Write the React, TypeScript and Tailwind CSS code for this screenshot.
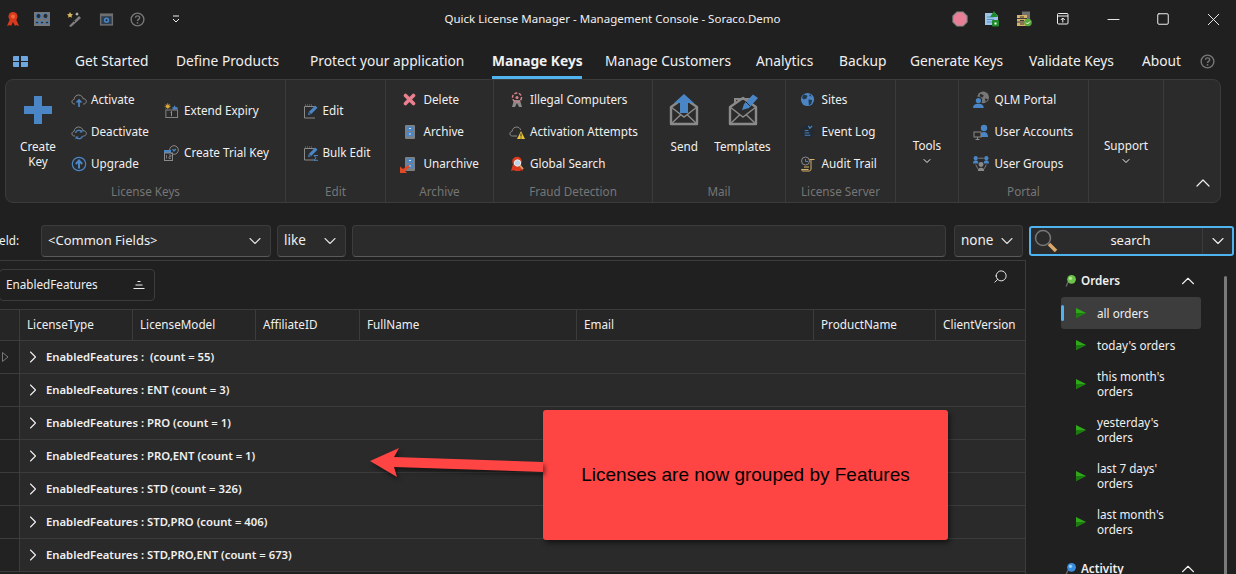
import type { ReactNode } from "react";
import { ChevronDown, ChevronRight, ChevronUp, Search, X, Minus, Square } from "lucide-react";

const BLUE = "#4a86c5";
const GRAY = "#8a8a8a";

function Ic({ s = 16, vb = 16, children }: { s?: number; vb?: number; children: ReactNode }) {
  return (
    <svg width={s} height={s} viewBox={`0 0 ${vb} ${vb}`} fill="none" className="shrink-0">
      {children}
    </svg>
  );
}

const HelpIc = ({ s = 15 }: { s?: number }) => (
  <Ic s={s}>
    <circle cx="8" cy="8" r="6.8" stroke="#777" strokeWidth="1.5" />
    <path d="M5.8 6.2c.2-2.8 4.6-2.8 4.5 0 0 1.7-2.3 1.7-2.3 3.5" stroke="#777" strokeWidth="1.5" />
    <rect x="7.2" y="10.8" width="1.6" height="1.6" fill="#777" />
  </Ic>
);

const RibbonIc = ({ hood = "#d93a1e" }: { hood?: string }) => (
  <Ic s={16}>
    <path d="M5 8 2 15l3-1 1 1 2-4 2 4 1-1 3 1-3-7z" fill={hood} />
    <circle cx="8" cy="5.5" r="4.5" fill={hood} />
    <circle cx="8" cy="5.5" r="2" fill="#ef6a3a" />
  </Ic>
);

const MixerIc = () => (
  <Ic s={16}>
    <rect x="0" y="1" width="16" height="14" fill="#777" />
    <circle cx="4.5" cy="5" r="2.6" fill="#2b2b2b" stroke={BLUE} />
    <circle cx="11.5" cy="5" r="2.6" fill="#2b2b2b" stroke={BLUE} />
    <circle cx="3" cy="11.5" r="1.5" fill="#2b2b2b" stroke={BLUE} />
    <circle cx="8" cy="11.5" r="1.5" fill="#2b2b2b" stroke={BLUE} />
    <circle cx="13" cy="11.5" r="1.5" fill="#2b2b2b" stroke={BLUE} />
  </Ic>
);

const WandIc = () => (
  <Ic s={16}>
    <path d="m3 15 10-10 2 2L5 16z" fill="#7f7f7f" />
    <path d="m7 9 2 2" stroke="#222" />
    <path d="m4 1 1 2 2 .3-1.500 1.400.4 2.100L4 5.800 2.100 6.800l.4-2.100L1 3.300 3 3z" fill="#d8b85a" />
    <path d="m11 1 .7 1.500L13 3l-1.300.7L11 5l-.7-1.300L9 3l1.300-.5z" fill="#c9c9c9" />
  </Ic>
);

const SetupIc = () => (
  <Ic s={15}>
    <rect x="1" y="1.500" width="14" height="13" fill="#6f6f6f" />
    <rect x="2.500" y="4.500" width="11" height="8.500" fill="#2c3d50" />
    <circle cx="8" cy="8.700" r="2.800" fill={BLUE} />
    <circle cx="8" cy="8.700" r="1.100" fill="#222" />
  </Ic>
);

const CloudPath = ({ c = "#8a8a8a" }: { c?: string }) => (
  <path d="M4 12H3.500C1.500 12 .7 10.500 1 9.200 1.300 8 2.300 7.500 3 7.500 3.300 4.500 5.500 3 7.700 3c2.300 0 4 1.700 4.300 3.700 2.200-.1 3.500 1.400 3.300 3C15 11.200 14 12 12.500 12H12" stroke={c} strokeWidth="1" />
);

const ActivateIc = () => (
  <Ic>
    <CloudPath />
    <path d="M8 8v7M5.500 10.500 8 8l2.500 2.500" stroke={BLUE} strokeWidth="1.700" />
  </Ic>
);

const DeactivateIc = () => (
  <Ic>
    <CloudPath />
    <path d="M4.500 9a3.500 3.500 0 0 1 6-1.500M11.500 12a3.500 3.500 0 0 1-6 1.500" stroke={BLUE} strokeWidth="1.200" />
    <path d="m11.500 5.500-.2 3h-2.800zM4.500 15.500l.2-3h2.800z" fill={BLUE} />
  </Ic>
);

const UpgradeIc = () => (
  <Ic>
    <circle cx="8" cy="8" r="6.700" stroke={BLUE} strokeWidth="1.200" />
    <path d="M8 12.500V5M4.800 8 8 4.500 11.200 8" stroke={BLUE} strokeWidth="2" />
  </Ic>
);

const ExtendIc = () => (
  <Ic s={15}>
    <circle cx="4" cy="3.500" r="2" fill="#d9a83a" />
    <path d="M4 0v7M.5 3.500h7M1.500 1l5 5M6.500 1l-5 5" stroke="#d9a83a" strokeWidth=".6" />
    <path d="M9 4.500h1.500V3H12v1.500h2.500v2.500H9z" fill={BLUE} />
    <rect x="2" y="7.500" width="12.500" height="8" stroke="#8a8a8a" />
    <path d="M8 9v5M7 10l1-1" stroke="#999" />
  </Ic>
);

const TrialIc = () => (
  <Ic s={16}>
    <circle cx="11" cy="5" r="4.300" stroke="#8a8a8a" />
    <path d="M9.500 4.200 11 6l1.800-2" stroke={BLUE} strokeWidth="1.300" />
    <rect x="1" y="5" width="7" height="3" fill={BLUE} />
    <rect x="1.500" y="8" width="8" height="7.500" stroke="#8a8a8a" />
    <path d="M3.500 10v3.500M6 10h2v1.700H6v1.800h2" stroke="#8a8a8a" strokeWidth=".8" />
  </Ic>
);

const EditIc = ({ sigma = false }: { sigma?: boolean }) => (
  <Ic s={16}>
    <path d="M1.500 3.500h10M1.500 3.500v11.500H12" stroke="#8a8a8a" strokeWidth="1" />
    <path d="M2.500 1.500v2M4.500 1.500v2M6.500 1.500v2M8.500 1.500v2" stroke="#8a8a8a" strokeWidth=".8" strokeDasharray="1 1" />
    <path d="m5 12 .8-3 6.400-6.500 2.300 2.300L8 11.200z" fill={BLUE} />
    <path d="m6 9.500 2 1.800" stroke="#222" strokeWidth=".7" />
    {sigma && <path d="M15 10.500h-4l2 2.300-2 2.500h4" stroke={BLUE} strokeWidth="1" />}
  </Ic>
);

const DeleteIc = () => (
  <Ic s={13} vb={13}>
    <path d="M2.500 2.500 10.500 10.500M10.500 2.500 2.500 10.500" stroke="#e8808f" strokeWidth="3.600" strokeLinecap="round" />
  </Ic>
);

const ArchiveIc = () => (
  <Ic s={16}>
    <rect x="3" y="1" width="10" height="14" rx="1" fill="#7f7f7f" />
    <rect x="4.500" y="2.500" width="7" height="4.500" fill={BLUE} />
    <rect x="4.500" y="8" width="7" height="4.500" fill={BLUE} />
    <rect x="7" y="4" width="2" height="1" fill="#ddd" />
    <rect x="7" y="9.500" width="2" height="1" fill="#ddd" />
  </Ic>
);

const UnarchiveIc = () => (
  <div className="relative h-4 w-4 shrink-0">
    <ArchiveIc />
    <svg width="11" height="9" viewBox="0 0 11 9" className="absolute -bottom-[1px] -left-[2px]">
      <path d="M0 2.500V9h7L5 7l5-4-2-2-5 4z" fill="#e04a24" />
    </svg>
  </div>
);

const IllegalIc = () => (
  <Ic>
    <path d="M5 8 3 15h3l2-4 2 4h3l-2-7z" fill="#8a8a8a" />
    <circle cx="8" cy="5.500" r="4.500" stroke="#d9808c" strokeWidth="1.500" strokeDasharray="3 1.500" />
    <circle cx="8" cy="5.500" r="1.500" fill="#d9808c" />
  </Ic>
);

const AttemptsIc = () => (
  <Ic>
    <path d="M8 12H3.500C1.500 12 .5 10.500 1 9 1.300 8 2 7.500 3 7.500 3.300 4.500 5.500 3 7.700 3c2 0 3.500 1.300 4 3" stroke="#8a8a8a" />
    <path d="m12 7 4 8H8z" fill="#e8c33a" />
    <path d="M12 9.500v3M12 13.500v1" stroke="#222" />
  </Ic>
);

const GlobalSearchIc = () => (
  <Ic>
    <path d="M4 8 2 15l3-1 1 1h5l1-1 2 1-2-7z" fill="#d93a1e" />
    <circle cx="8" cy="5.500" r="4.800" fill="#d93a1e" />
    <circle cx="8.500" cy="7" r="3.200" fill="#bcd3ea" stroke="#eee" />
    <path d="m11 9.500 3 3.500" stroke="#d9a86a" strokeWidth="1.800" />
  </Ic>
);

function EnvelopeIc({ children }: { children: ReactNode }) {
  return (
    <svg width="30" height="32" viewBox="0 0 30 32" fill="none">
      <path d="M2 13 15 4l13 9v17H2z" stroke="#8a8a8a" strokeWidth="2.400" strokeLinejoin="round" />
      <path d="m2 13 13 10 13-10M2 30l10-9.500M28 30 18 20.500" stroke="#8a8a8a" strokeWidth="1.500" />
      {children}
    </svg>
  );
}

const SendIc = () => (
  <EnvelopeIc>
    <path d="M15 0 25 9h-6v10h-8V9H5z" fill={BLUE} />
  </EnvelopeIc>
);

const TemplatesIc = () => (
  <EnvelopeIc>
    <path d="M7 9V5h16" stroke="#8a8a8a" strokeWidth="2" />
    <path d="m14 16 2-6L25 .5 30 4l-9 10z" fill={BLUE} />
    <path d="m18 8 4 4" stroke="#2b2b2b" />
  </EnvelopeIc>
);

const SitesIc = () => (
  <Ic s={15}>
    <circle cx="8" cy="8" r="7" fill={BLUE} />
    <path d="M4 2.500 8 4 7 7 4 8 2 6zM9 8l4 .5-1 4-2.500 2zM10.500 1.800l2 3-2.500-.5z" fill="#27384a" />
  </Ic>
);

const EventLogIc = () => (
  <Ic s={15}>
    <circle cx="8" cy="8" r="7.500" fill="#232a31" />
    <path d="M5 7h4M5 9.500h5M5 12h6" stroke={BLUE} strokeWidth="1" />
    <path d="m9 2 1.500 2.500L13 2" stroke={BLUE} strokeWidth="1.200" />
  </Ic>
);

const AuditIc = () => (
  <Ic s={16}>
    <circle cx="5.500" cy="5" r="4" stroke="#8a8a8a" />
    <path d="M5.500 3v2.500H8" stroke={BLUE} />
    <path d="M9.500 3.500h5M11 4v9c0 1.500-1 2-2 2H3c-1 0-1.500-.7-1.500-1.500h7" stroke="#d6b36a" />
    <path d="M4 11h5" stroke="#d6b36a" />
  </Ic>
);

const PortalIc = () => (
  <Ic s={17}>
    <circle cx="10.500" cy="6" r="5.500" fill="#777" />
    <path d="M8 2.500 11 4 10 6 7 5zM12 7l3 .5-2 3z" fill="#2b2b2b" />
    <circle cx="6" cy="9" r="3" fill={BLUE} stroke="#2b2b2b" />
    <path d="M1 16c0-3 2-4 5-4s5 1 5 4z" fill={BLUE} />
  </Ic>
);

const AccountsIc = () => (
  <Ic s={16}>
    <circle cx="11" cy="4" r="3.200" fill={BLUE} />
    <path d="M7 13c0-3.500 1.500-5 4-5s4 1.500 4 5z" fill={BLUE} />
    <rect x="1" y="8" width="7" height="5" stroke="#8a8a8a" fill="#2b2b2b" />
    <path d="M4.500 13v2M2.500 15.500h4" stroke="#8a8a8a" />
  </Ic>
);

const GroupsIc = () => (
  <Ic s={17}>
    <circle cx="3.500" cy="3" r="2" fill={BLUE} />
    <circle cx="13.500" cy="3" r="2" fill={BLUE} />
    <path d="M1 8c0-2 1-3 2.500-3S6 6 6 8zM11 8c0-2 1-3 2.500-3S16 6 16 8z" fill={BLUE} />
    <circle cx="8.500" cy="9" r="2.300" fill="#8a8a8a" />
    <path d="M5.500 15c0-2 1-3 3-3s3 1 3 3z" fill="#8a8a8a" />
    <path d="M6 3h5M3.500 9l2 4M13.500 9l-2 4" stroke={GRAY} strokeWidth=".8" />
  </Ic>
);

const PinIc = ({ c, hi }: { c: string; hi: string }) => (
  <Ic s={12} vb={11}>
    <path d="m3 6-2 4.500" stroke="#666" strokeWidth="1.200" />
    <circle cx="6" cy="4" r="4" fill={c} />
    <circle cx="5" cy="3" r="1.500" fill={hi} />
  </Ic>
);

const PlayIc = () => (
  <svg width="10" height="10" viewBox="0 0 10 10" className="shrink-0">
    <path d="M0 0 10 5 0 10z" fill="#2fa81a" />
    <path d="M0 5 10 5 0 10z" fill="#1c7a10" />
  </svg>
);

function Row({ icon, label, h = "h-8", gap = "gap-[4px]" }: { icon: ReactNode; label: string; h?: string; gap?: string }) {
  return (
    <div className={`flex items-center whitespace-nowrap ${h} ${gap}`}>
      <span className="flex w-4 justify-center">{icon}</span>
      <span>{label}</span>
    </div>
  );
}

function Group({ w, label, children, border = true }: { w: string; label?: string; children: ReactNode; border?: boolean }) {
  return (
    <div className={`flex flex-col shrink-0 ${w} ${border ? "border-r border-[#3b3b3b]" : ""}`}>
      <div className="flex h-[101px] items-center justify-center pt-[2px]">{children}</div>
      <div className="text-center leading-5 text-[#767676]">{label}</div>
    </div>
  );
}

function Big({ icon, label }: { icon: ReactNode; label: string }) {
  return (
    <div className="flex h-full flex-col items-center pt-[8px] text-center leading-[15px]">
      <div className="flex h-[40px] items-center justify-center">{icon}</div>
      <div className="mt-[9px]">{label}</div>
    </div>
  );
}

function Select({ w, label, size = "text-[13.5px]" }: { w: string; label: string; size?: string }) {
  return (
    <div className={`flex h-8 shrink-0 items-center justify-between rounded-[4px] border border-[#3c3c3c] border-b-[#5a5a5a] bg-[#2b2b2b] pl-[6px] pr-[5px] ${size} ${w}`}>
      <span className="-mt-[1px]">{label}</span>
      <ChevronDown size={20} strokeWidth={1.300} color="#dddddd" />
    </div>
  );
}

const TABS = [
  { label: "Get Started", w: "w-[101px]" },
  { label: "Define Products", w: "w-[134px]" },
  { label: "Protect your application", w: "w-[182px]" },
  { label: "Manage Keys", w: "w-[113px]", active: true },
  { label: "Manage Customers", w: "w-[151px]" },
  { label: "Analytics", w: "w-[83px]" },
  { label: "Backup", w: "w-[71px]" },
  { label: "Generate Keys", w: "w-[119px]" },
  { label: "Validate Keys", w: "w-[113px]" },
  { label: "About", w: "w-[65px]" },
];

const COLS = [
  { label: "LicenseType", w: "w-[113px]" },
  { label: "LicenseModel", w: "w-[123px]" },
  { label: "AffiliateID", w: "w-[104px]" },
  { label: "FullName", w: "w-[217px]" },
  { label: "Email", w: "w-[237px]" },
  { label: "ProductName", w: "w-[122px]" },
  { label: "ClientVersion", w: "w-[90px]" },
];

const GROUPS = [
  "EnabledFeatures :  (count = 55)",
  "EnabledFeatures : ENT (count = 3)",
  "EnabledFeatures : PRO (count = 1)",
  "EnabledFeatures : PRO,ENT (count = 1)",
  "EnabledFeatures : STD (count = 326)",
  "EnabledFeatures : STD,PRO (count = 406)",
  "EnabledFeatures : STD,PRO,ENT (count = 673)",
];

const ORDERS = [
  { lines: ["all orders"], selected: true },
  { lines: ["today's orders"] },
  { lines: ["this month's", "orders"] },
  { lines: ["yesterday's", "orders"] },
  { lines: ["last 7 days'", "orders"] },
  { lines: ["last month's", "orders"] },
];

export default function App() {
  return (
    <div className="relative h-[574px] w-[1236px] overflow-hidden bg-[#202020] font-['Noto_Sans',sans-serif] text-[11.7px] text-[#f0f0f0]">
      {/* title bar */}
      <div className="flex h-[38px] items-center">
        <div className="flex items-center gap-4 pl-[5px]">
          <RibbonIc />
          <div className="-ml-[3px]"><MixerIc /></div>
          <WandIc />
          <div className="ml-[1px]"><SetupIc /></div>
          <HelpIc />
          <svg width="8" height="8" viewBox="0 0 8 8" className="ml-[11px]">
            <path d="M1 1h6M1 4l3 3 3-3" stroke="#eee" fill="none" />
          </svg>
        </div>
        <div className="flex-1 pl-[93px] text-center text-[11.5px]">Quick License Manager - Management Console - Soraco.Demo</div>
        <div className="flex items-center">
          <div className="mr-[16px] flex items-center gap-[16px]">
            <Ic>
              <path d="M5 1h6l4 4v6l-4 4H5l-4-4V5z" fill="#e87f96" stroke="#8a8a8a" strokeWidth="1.200" />
            </Ic>
            <Ic>
              <path d="M1 2h10l3 3v9H1z" fill="#9cc4e8" />
              <path d="M3 6h7M3 8.500h7M3 11h5" stroke="#5a8fc0" />
              <path d="M10 0 14 6H6z" fill="#1f8a2a" />
              <rect x="8" y="9" width="7" height="6.500" rx="1" fill="#1f8a2a" />
              <rect x="10.500" y="11.500" width="2" height="2" fill="#fff" />
            </Ic>
            <Ic>
              <rect x="6" y="0.500" width="8" height="8" fill="#707070" />
              <rect x="1" y="4" width="10" height="11" fill="#d6b36a" />
              <path d="M1 7.500h10M1 11h10M4 6h4M4 9.500h4M4 13h4" stroke="#3a3a3a" />
              <circle cx="12" cy="11.500" r="3.800" fill="#5aa93a" />
              <path d="m10 11.500 1.500 1.500 2.500-2.500" stroke="#fff" />
            </Ic>
          </div>
          <div className="mr-[12px] flex w-[30px] justify-center">
            <svg width="12" height="12" viewBox="0 0 12 12" fill="none" stroke="#f0f0f0">
              <rect x=".5" y=".5" width="10.500" height="10.500" rx="1" />
              <path d="M.5 3h10.500M5.800 9.500V5M3.800 7l2-2 2 2" />
            </svg>
          </div>
          <div className="flex w-[46px] justify-center"><Minus size={19} strokeWidth={1.200} /></div>
          <div className="flex w-[54px] justify-center"><Square size={14} strokeWidth={1.700} /></div>
          <div className="flex w-[46px] justify-center"><X size={21} strokeWidth={1.100} /></div>
        </div>
      </div>

      {/* tabs */}
      <div className="flex h-[41px] items-center pt-[5px] text-[13.75px]">
        <div className="flex w-[75px] justify-start pl-[13px]">
          <svg width="15" height="11" viewBox="0 0 15 11">
            <path d="M0 1a1 1 0 0 1 1-1h5v5H0zM8 0h6a1 1 0 0 1 1 1v4H8zM0 6h6v5H1a1 1 0 0 1-1-1zM8 6h7v4a1 1 0 0 1-1 1H8z" fill="#6ea6df" />
          </svg>
        </div>
        {TABS.map((t) => (
          <div key={t.label} className={`${t.w} relative flex h-[36px] shrink-0 items-center whitespace-nowrap ${t.active ? "font-bold" : ""}`}>
            {t.label}
            {t.active && <div className="absolute bottom-0 left-0 h-[3px] w-[90px] bg-[#4fb3f0]" />}
          </div>
        ))}
        <div className="-ml-[7px]"><HelpIc s={15} /></div>
      </div>

      {/* ribbon */}
      <div className="ml-[5px] flex h-[124px] w-[1216px] rounded-[8px] border border-[#3b3b3b] bg-[#2b2b2b]">
        <Group w="w-[280px]" label="License Keys">
          <div className="flex h-full w-full items-center">
            <div className="ml-[14px] h-full w-[36px] shrink-0">
              <Big
                label="Create Key"
                icon={
                  <svg width="28" height="28" viewBox="0 0 28 28">
                    <path d="M10 0h8v10h10v8H18v10h-8V18H0v-8h10z" fill={BLUE} />
                  </svg>
                }
              />
            </div>
            <div className="ml-[15px] w-[92px] shrink-0">
              <Row icon={<ActivateIc />} label="Activate" />
              <Row icon={<DeactivateIc />} label="Deactivate" />
              <Row icon={<UpgradeIc />} label="Upgrade" />
            </div>
            <div className="w-[100px] shrink-0">
              <Row h="h-[42px]" gap="gap-[5px]" icon={<ExtendIc />} label="Extend Expiry" />
              <Row h="h-[42px]" gap="gap-[5px]" icon={<TrialIc />} label="Create Trial Key" />
            </div>
          </div>
        </Group>
        <Group w="w-[100px]" label="Edit">
          <div className="w-[66px]">
            <Row h="h-[42px]" icon={<EditIc />} label="Edit" />
            <Row h="h-[42px]" icon={<EditIc sigma />} label="Bulk Edit" />
          </div>
        </Group>
        <Group w="w-[108px]" label="Archive">
          <div className="w-[76px]">
            <Row gap="gap-[6px]" icon={<DeleteIc />} label="Delete" />
            <Row gap="gap-[6px]" icon={<ArchiveIc />} label="Archive" />
            <Row gap="gap-[6px]" icon={<UnarchiveIc />} label="Unarchive" />
          </div>
        </Group>
        <Group w="w-[159px]" label="Fraud Detection">
          <div className="w-[128px]">
            <Row gap="gap-[5px]" icon={<IllegalIc />} label="Illegal Computers" />
            <Row gap="gap-[5px]" icon={<AttemptsIc />} label="Activation Attempts" />
            <Row gap="gap-[5px]" icon={<GlobalSearchIc />} label="Global Search" />
          </div>
        </Group>
        <Group w="w-[133px]" label="Mail">
          <div className="flex h-full gap-[15px] pl-[2px]">
            <Big icon={<SendIc />} label="Send" />
            <Big icon={<TemplatesIc />} label="Templates" />
          </div>
        </Group>
        <Group w="w-[110px]" label="License Server">
          <div className="w-[82px]">
            <Row gap="gap-[6px]" icon={<SitesIc />} label="Sites" />
            <Row gap="gap-[6px]" icon={<EventLogIc />} label="Event Log" />
            <Row gap="gap-[6px]" icon={<AuditIc />} label="Audit Trail" />
          </div>
        </Group>
        <Group w="w-[63px]">
          <div className="flex flex-col items-center pt-[41px]">
            <span className="leading-4">Tools</span>
            <ChevronDown size={12} strokeWidth={2} className="mt-[2px]" />
          </div>
        </Group>
        <Group w="w-[130px]" label="Portal">
          <div className="w-[102px]">
            <Row gap="gap-[6px]" icon={<PortalIc />} label="QLM Portal" />
            <Row gap="gap-[6px]" icon={<AccountsIc />} label="User Accounts" />
            <Row gap="gap-[6px]" icon={<GroupsIc />} label="User Groups" />
          </div>
        </Group>
        <Group w="w-[75px]">
          <div className="flex flex-col items-center pt-[41px]">
            <span className="leading-4">Support</span>
            <ChevronDown size={12} strokeWidth={2} className="mt-[2px]" />
          </div>
        </Group>
        <div className="flex flex-1 items-end justify-center pb-[7px] pl-[22px]">
          <ChevronUp size={24} strokeWidth={1.200} />
        </div>
      </div>

      {/* filter row */}
      <div className="ml-[-23px] mt-[22px] flex h-8 w-[1259px] items-center">
        <span className="w-[64px] shrink-0 pl-[13px]">Field:</span>
        <Select w="w-[230px]" size="text-[13px]" label="<Common Fields>" />
        <div className="ml-[6px]"><Select w="w-[69px]" label="like" /></div>
        <div className="ml-[6px] h-8 w-[594px] shrink-0 rounded-[4px] border border-[#3c3c3c] border-b-[#5a5a5a] bg-[#2b2b2b]" />
        <div className="ml-[8px]"><Select w="w-[69px]" label="none" /></div>
        <div className="ml-[6px] flex h-[30px] w-[205px] shrink-0 items-center rounded-[3px] border-2 border-[#4fb3f0] bg-[#2b2b2b]">
          <svg width="26" height="26" viewBox="0 0 26 26" fill="none" className="ml-[2px] shrink-0">
            <circle cx="10" cy="10" r="7.500" stroke="#777" strokeWidth="1.500" />
            <path d="m16 16 7 7" stroke="#d9a86a" strokeWidth="3.500" />
          </svg>
          <span className="flex-1 text-center text-[13px]">search</span>
          <div className="flex h-full w-[30px] items-center justify-center border-l border-[#3c3c3c]">
            <ChevronDown size={20} strokeWidth={1.300} />
          </div>
        </div>
      </div>

      <div className="mt-[3px] flex">
        {/* grid */}
        <div className="h-[400px] w-[1026px] shrink-0 border-r border-t border-[#3c3c3c]">
          <div className="flex h-[48px] items-start justify-between pr-[17px]">
            <div className="ml-[-1px] mt-[8px] flex h-8 w-[156px] items-center justify-between rounded-[4px] border border-[#3c3c3c] pl-[6px] pr-[9px]">
              <span>EnabledFeatures</span>
              <svg width="12" height="10" viewBox="0 0 12 10" stroke="#eee">
                <path d="M4.500 1.500h3M2.500 5h7M.5 8.500h11" />
              </svg>
            </div>
            <Search size={15} strokeWidth={1.500} className="mt-[8px] scale-x-[-1]" />
          </div>
          <div className="flex h-[32px] border-y border-[#3c3c3c] bg-[#262626]">
            <div className="w-[20px] shrink-0 border-r border-[#3c3c3c]" />
            {COLS.map((c, i) => (
              <div key={c.label} className={`${c.w} flex shrink-0 items-center whitespace-nowrap pl-[7px] ${i < COLS.length - 1 ? "border-r border-[#3c3c3c]" : ""}`}>
                {c.label}
              </div>
            ))}
          </div>
          {GROUPS.map((g, i) => (
            <div key={g} className="flex h-[33px] border-b border-[#3c3c3c] bg-[#2a2a2a]">
              <div className="flex w-[20px] shrink-0 items-center border-r border-[#3c3c3c] bg-[#222222] pl-[2px]">
                {i === 0 && (
                  <svg width="7" height="10" viewBox="0 0 7 10" fill="none" stroke="#777">
                    <path d="M.5 .5 6 5 .5 9.500z" />
                  </svg>
                )}
              </div>
              <div className="flex items-center whitespace-pre pl-[3px] text-[11.3px] font-semibold">
                <ChevronRight size={20} strokeWidth={1.300} className="mr-[3px]" />
                {g}
              </div>
            </div>
          ))}
        </div>

        {/* side list */}
        <div className="relative ml-[35px] w-[140px] shrink-0 pt-[12px]">
          <div className="flex h-[18px] items-center pl-[4px] pr-[2px] font-semibold">
            <PinIc c="#6cc24a" hi="#b5ec8e" />
            <span className="ml-[4px] flex-1">Orders</span>
            <ChevronUp size={22} strokeWidth={1.200} />
          </div>
          <div className="mt-[7px]">
            {ORDERS.map((o) => (
              <div key={o.lines[0]} className={`relative flex min-h-8 items-center rounded-[3px] py-2 pl-[15px] leading-[15px] ${o.selected ? "bg-[#3d3d3d]" : ""}`}>
                {o.selected && <div className="absolute left-0 top-[8px] h-4 w-[3px] rounded-full bg-[#4fb3f0]" />}
                <PlayIc />
                <div className="ml-[11px]">
                  {o.lines.map((l) => (
                    <div key={l}>{l}</div>
                  ))}
                </div>
              </div>
            ))}
          </div>
          <div className="mt-[15px] flex h-[18px] items-center pl-[4px] pr-[2px] font-semibold">
            <PinIc c="#3b8fe0" hi="#9fd0ff" />
            <span className="ml-[4px] flex-1">Activity</span>
            <ChevronUp size={22} strokeWidth={1.200} />
          </div>
          <div className="absolute left-[163px] top-[16px] h-[300px] w-[3px] rounded-full bg-[#7a7a7a]" />
        </div>
      </div>

      {/* annotation */}
      <div className="absolute left-[543px] top-[410px] flex h-[130px] w-[405px] items-center justify-center rounded-[3px] bg-[#ff4444] font-['Liberation_Sans',sans-serif] text-[19px] text-black shadow-[2px_3px_5px_rgba(0,0,0,0.5)]">
        Licenses are now grouped by Features
      </div>
      <svg width="180" height="40" viewBox="0 0 180 40" className="absolute left-[366px] top-[444px] drop-shadow-[2px_3px_2px_rgba(0,0,0,0.5)]">
        <path d="M4 17 33 4 28 13 177 18V28L28 23 31 33z" fill="#ff4444" />
      </svg>
    </div>
  );
}
